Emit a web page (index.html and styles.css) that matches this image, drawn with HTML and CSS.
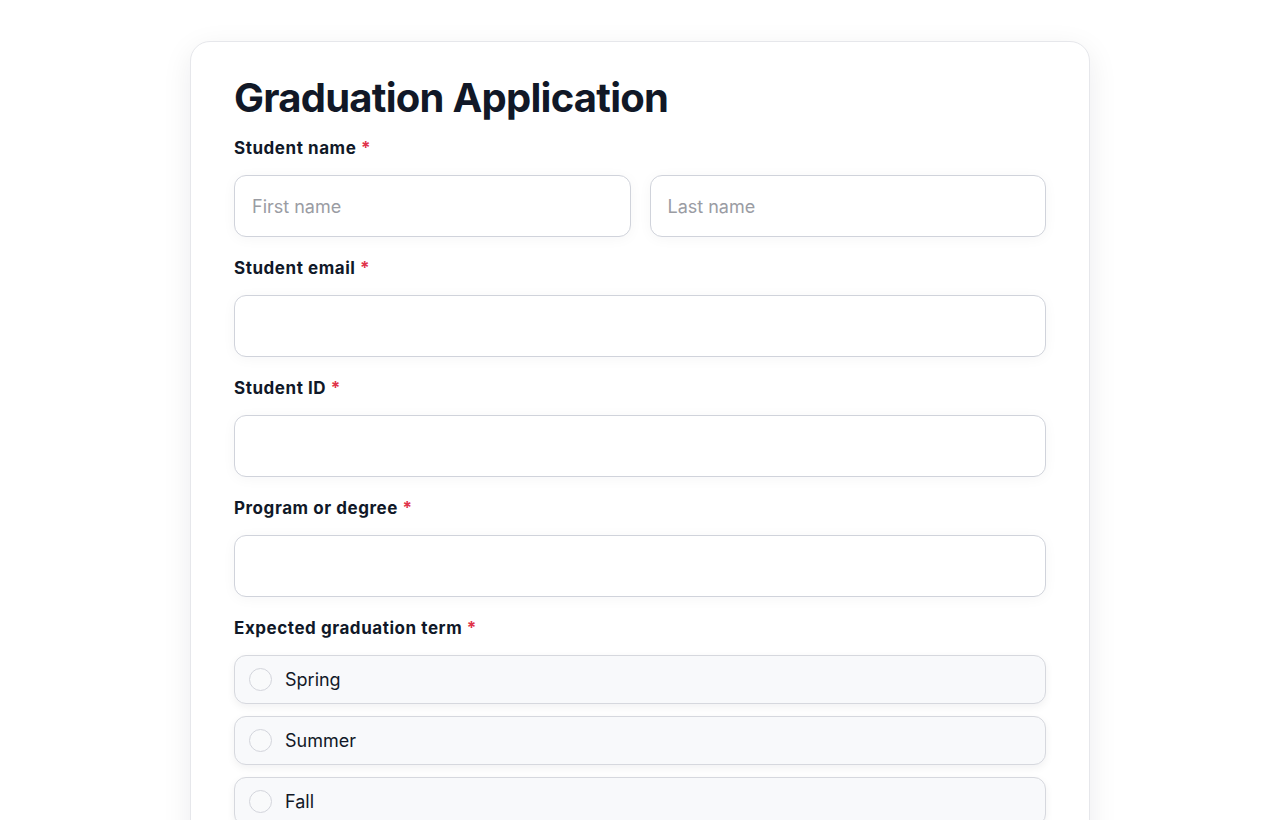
FILE: index.html
```html
<!DOCTYPE html>
<html lang="en">
<head>
<meta charset="utf-8">
<title>Graduation Application</title>
<link rel="stylesheet" href="styles.css">
</head>
<body>
<main class="page">
  <form class="card">
    <h1 class="title">Graduation Application</h1>

    <div class="field">
      <label class="label">Student name <span class="req">*</span></label>
      <div class="row">
        <input class="input" type="text" placeholder="First name">
        <input class="input" type="text" placeholder="Last name">
      </div>
    </div>

    <div class="field">
      <label class="label">Student email <span class="req">*</span></label>
      <input class="input" type="email">
    </div>

    <div class="field">
      <label class="label">Student ID <span class="req">*</span></label>
      <input class="input" type="text">
    </div>

    <div class="field">
      <label class="label">Program or degree <span class="req">*</span></label>
      <input class="input" type="text">
    </div>

    <div class="field">
      <label class="label">Expected graduation term <span class="req">*</span></label>
      <div class="options">
        <label class="option"><span class="radio"></span><span class="opt-text">Spring</span></label>
        <label class="option"><span class="radio"></span><span class="opt-text">Summer</span></label>
        <label class="option"><span class="radio"></span><span class="opt-text">Fall</span></label>
      </div>
    </div>
  </form>
</main>
</body>
</html>
```

FILE: styles.css
```css
* { box-sizing: border-box; }

html, body {
  margin: 0;
  padding: 0;
  background: #ffffff;
}

body {
  font-family: Inter, "Noto Sans", "Liberation Sans", sans-serif;
  color: #101828;
}

.page {
  display: flex;
  justify-content: center;
  padding-top: 41px;
}

.card {
  width: 900px;
  background: #ffffff;
  border: 1px solid #e6e7eb;
  border-radius: 20px;
  box-shadow: 0 8px 30px rgba(16, 24, 40, 0.08);
  padding: 32px 43px 40px;
  display: flex;
  flex-direction: column;
  gap: 19px;
}

.title {
  margin: 0;
  font-size: 40px;
  line-height: 48px;
  font-weight: 700;
  color: #111827;
  letter-spacing: -0.75px;
  margin-bottom: -5px;
}

.field {
  display: flex;
  flex-direction: column;
  gap: 15px;
}

.label {
  font-size: 17px;
  line-height: 24px;
  font-weight: 700;
  color: #101828;
  letter-spacing: 0.55px;
}

.req {
  color: #e0344b;
  font-weight: 700;
}

.row {
  display: grid;
  grid-template-columns: 1fr 1fr;
  gap: 19px;
}

.input {
  width: 100%;
  height: 62px;
  border: 1px solid #d0d3db;
  border-radius: 12px;
  background: #ffffff;
  padding: 0 17px;
  font-family: inherit;
  font-size: 18px;
  color: #101828;
  box-shadow: 0 2px 14px rgba(16, 24, 40, 0.04);
  outline: none;
}

.input::placeholder {
  color: #9a9ca3;
}

.options {
  display: flex;
  flex-direction: column;
  gap: 12px;
}

.option {
  display: flex;
  align-items: center;
  gap: 13px;
  height: 49px;
  padding: 0 14px;
  background: #f8f9fb;
  border: 1px solid #d6d8de;
  border-radius: 12px;
  box-shadow: 0 3px 8px rgba(16, 24, 40, 0.06);
}

.radio {
  width: 23px;
  height: 23px;
  border-radius: 50%;
  border: 1px solid #d3d5dc;
  background: #f9fafb;
  flex: none;
}

.opt-text {
  font-size: 18px;
  color: #111827;
}
```
